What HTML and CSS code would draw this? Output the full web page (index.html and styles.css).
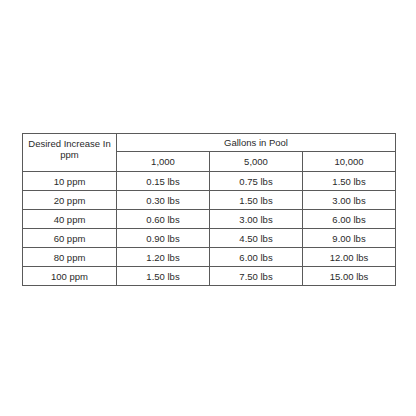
FILE: index.html
```html
<!DOCTYPE html>
<html>
<head>
<meta charset="utf-8">
<link rel="stylesheet" href="styles.css">
</head>
<body>
<table class="dose">
  <tr class="r-head1">
    <th rowspan="2" class="c-label">Desired Increase In<br>ppm</th>
    <th colspan="3">Gallons in Pool</th>
  </tr>
  <tr class="r-head2">
    <td>1,000</td><td>5,000</td><td>10,000</td>
  </tr>
  <tr><td>10 ppm</td><td>0.15 lbs</td><td>0.75 lbs</td><td>1.50 lbs</td></tr>
  <tr><td>20 ppm</td><td>0.30 lbs</td><td>1.50 lbs</td><td>3.00 lbs</td></tr>
  <tr><td>40 ppm</td><td>0.60 lbs</td><td>3.00 lbs</td><td>6.00 lbs</td></tr>
  <tr><td>60 ppm</td><td>0.90 lbs</td><td>4.50 lbs</td><td>9.00 lbs</td></tr>
  <tr><td>80 ppm</td><td>1.20 lbs</td><td>6.00 lbs</td><td>12.00 lbs</td></tr>
  <tr><td>100 ppm</td><td>1.50 lbs</td><td>7.50 lbs</td><td>15.00 lbs</td></tr>
</table>
</body>
</html>
```
FILE: styles.css
```css
html, body {
  margin: 0;
  padding: 0;
  background: #ffffff;
}
body {
  padding: 133px 0 0 22px;
  font-family: "Liberation Sans", Arial, sans-serif;
  font-size: 9.5px;
  color: #2a2a2a;
}
.dose {
  border-collapse: collapse;
  width: 374px;
  table-layout: fixed;
}
.dose th, .dose td {
  border: 1px solid #5a5a5a;
  padding: 0;
  text-align: center;
  vertical-align: middle;
  font-weight: normal;
  height: 18px;
  line-height: 11px;
}
.dose .r-head1 th { height: 17px; }
.dose .r-head2 td { height: 19px; }
.dose .c-label {
  width: 93px;
  vertical-align: top;
  padding-top: 4px;
}
```
